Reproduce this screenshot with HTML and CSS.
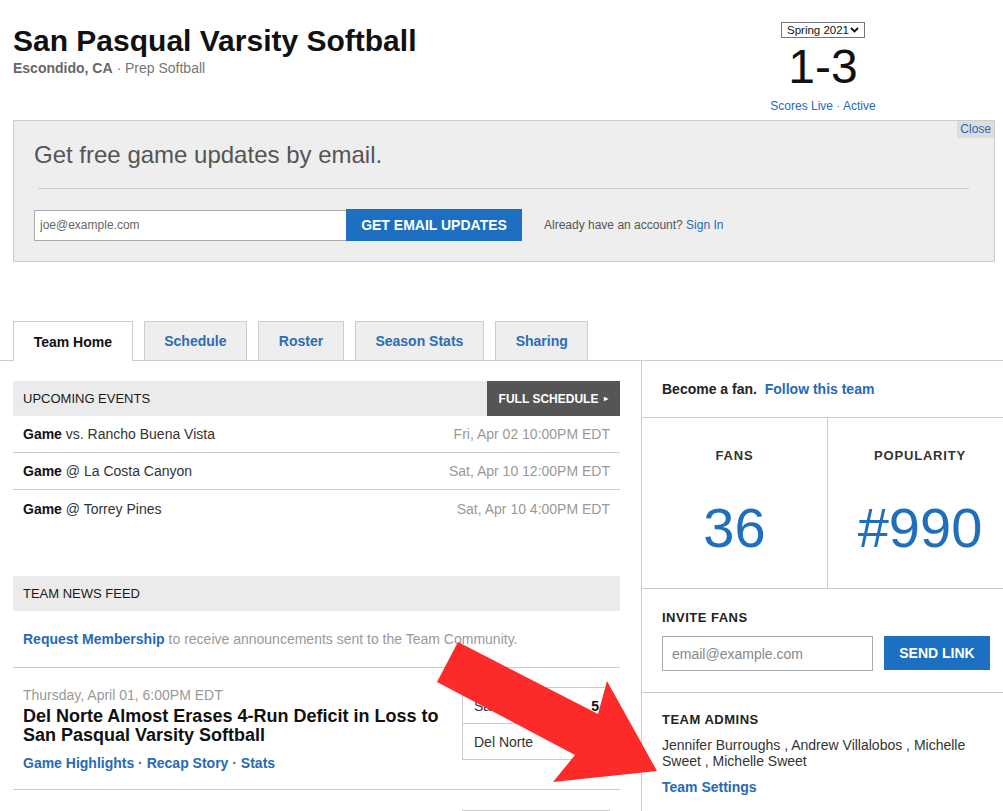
FILE: index.html
```html
<!DOCTYPE html>
<html lang="en">
<head>
<meta charset="utf-8">
<title>San Pasqual Varsity Softball</title>
<link rel="stylesheet" href="styles.css">
</head>
<body>
<div class="page">
  <header class="top">
    <div class="team">
      <h1 class="team-name">San Pasqual Varsity Softball</h1>
      <div class="team-meta"><b>Escondido, CA</b> · Prep Softball</div>
    </div>
    <div class="record">
      <div class="season-select">
        <span>Spring 2021</span>
        <svg class="chev" width="9" height="6" viewBox="0 0 9 6"><polyline points="1,1 4.5,4.5 8,1" fill="none" stroke="#111" stroke-width="1.8"/></svg>
      </div>
      <div class="record-score">1-3</div>
      <div class="record-links"><a>Scores Live</a> · <a>Active</a></div>
    </div>
  </header>

  <section class="email-banner">
    <a class="banner-close">Close</a>
    <h2 class="banner-title">Get free game updates by email.</h2>
    <hr class="banner-rule">
    <div class="banner-form">
      <input class="banner-input" type="text" placeholder="joe@example.com">
      <button class="banner-btn">GET EMAIL UPDATES</button>
      <span class="banner-account">Already have an account? <a>Sign In</a></span>
    </div>
  </section>

  <nav class="tabs">
    <a class="tab tab-active">Team Home</a>
    <a class="tab">Schedule</a>
    <a class="tab">Roster</a>
    <a class="tab">Season Stats</a>
    <a class="tab">Sharing</a>
  </nav>

  <div class="main">
    <div class="left">
      <div class="section-head">
        <span class="section-title">UPCOMING EVENTS</span>
        <a class="full-btn">FULL SCHEDULE <span class="tri">&#9656;</span></a>
      </div>
      <div class="events">
        <div class="event-row"><span><b>Game</b> vs. Rancho Buena Vista</span><span class="event-date">Fri, Apr 02 10:00PM EDT</span></div>
        <div class="event-row"><span><b>Game</b> @ La Costa Canyon</span><span class="event-date">Sat, Apr 10 12:00PM EDT</span></div>
        <div class="event-row"><span><b>Game</b> @ Torrey Pines</span><span class="event-date">Sat, Apr 10 4:00PM EDT</span></div>
      </div>

      <div class="section-head news-head">
        <span class="section-title">TEAM NEWS FEED</span>
      </div>
      <div class="request-row"><a class="link-bold">Request Membership</a> to receive announcements sent to the Team Community.</div>

      <div class="news-item">
        <div class="news-text">
          <div class="news-date">Thursday, April 01, 6:00PM EDT</div>
          <div class="news-headline">Del Norte Almost Erases 4-Run Deficit in Loss to San Pasqual Varsity Softball</div>
          <div class="news-links"><a>Game Highlights</a> · <a>Recap Story</a> · <a>Stats</a></div>
        </div>
        <div class="score-box">
          <div class="score-row"><span>San Pasqual</span><b>5</b></div>
          <div class="score-row"><span>Del Norte</span><span>4</span></div>
        </div>
      </div>
      <div class="news-item news-item-next">
        <div class="news-text"></div>
        <div class="score-box">
          <div class="score-row"><span></span><b></b></div>
          <div class="score-row"><span></span><span></span></div>
        </div>
      </div>
    </div>

    <aside class="right">
      <div class="fan-cta">Become a fan. &nbsp;<a>Follow this team</a></div>
      <div class="stats">
        <div class="stat">
          <div class="stat-label">FANS</div>
          <div class="stat-value">36</div>
        </div>
        <div class="stat stat-second">
          <div class="stat-label">POPULARITY</div>
          <div class="stat-value">#990</div>
        </div>
      </div>
      <div class="invite">
        <div class="side-label">INVITE FANS</div>
        <div class="invite-form">
          <input class="invite-input" type="text" placeholder="email@example.com">
          <button class="invite-btn">SEND LINK</button>
        </div>
      </div>
      <div class="admins">
        <div class="side-label">TEAM ADMINS</div>
        <div class="admin-names">Jennifer Burroughs , Andrew Villalobos , Michelle Sweet , Michelle Sweet</div>
        <a class="settings-link">Team Settings</a>
      </div>
    </aside>
  </div>

  <svg class="arrow" width="240" height="160" viewBox="430 632 240 160">
    <polygon points="458,642 598,714 607,681 657,771 553,782 575,755 437,682" fill="#fd2a2a"/>
  </svg>
</div>
</body>
</html>
```

FILE: styles.css
```css
html, body {
  overflow: hidden;
}
body {
  margin: 0;
  font-family: "Liberation Sans", Arial, sans-serif;
  color: #222;
  background: #fff;
}
a {
  color: #2769b7;
  text-decoration: none;
}
.page {
  position: relative;
  width: 1012px;
}

/* header */
.top {
  display: flex;
  justify-content: space-between;
  align-items: flex-start;
  padding-left: 13px;
}
.team {
  padding-top: 24px;
}
.team-name {
  margin: 0;
  font-size: 30px;
  line-height: 34px;
  font-weight: bold;
  color: #111;
}
.team-meta {
  margin-top: 2px;
  font-size: 14px;
  line-height: 16px;
  color: #777;
}
.team-meta b {
  color: #666;
}
.record {
  width: 120px;
  margin-right: 129px;
  padding-top: 22px;
  display: flex;
  flex-direction: column;
  align-items: center;
}
.season-select {
  width: 84px;
  height: 16px;
  box-sizing: border-box;
  border: 1px solid #767676;
  font-size: 11.5px;
  line-height: 14px;
  white-space: nowrap;
  color: #111;
  display: flex;
  align-items: center;
  justify-content: space-between;
  padding: 0 5px 0 5px;
}
.record-score {
  margin-top: 5px;
  font-size: 48px;
  line-height: 48px;
  color: #111;
}
.record-links {
  margin-top: 8px;
  font-size: 12px;
  line-height: 14px;
  color: #888;
}

/* email banner */
.email-banner {
  position: relative;
  margin: 7px 17px 0 13px;
  background: #eee;
  border: 1px solid #ccc;
  padding: 20px 25px 20px 20px;
}
.banner-close {
  position: absolute;
  top: 0;
  right: 0;
  background: #ddd;
  font-size: 12px;
  line-height: 17px;
  padding: 0 3px;
}
.banner-title {
  margin: 0;
  font-size: 24px;
  line-height: 28px;
  font-weight: normal;
  color: #555;
}
.banner-rule {
  border: 0;
  border-top: 1px solid #ccc;
  height: 0;
  margin: 19px 0 20px 4px;
}
.banner-form {
  display: flex;
  align-items: center;
}
.banner-input {
  width: 312px;
  height: 31px;
  box-sizing: border-box;
  border: 1px solid #aaa;
  border-right: 0;
  padding: 0 5px;
  margin: 0;
  font-family: "Liberation Sans", Arial, sans-serif;
  font-size: 12px;
  background: #fff;
  outline: none;
}
.banner-input::placeholder {
  color: #666;
}
.banner-btn {
  width: 176px;
  height: 32px;
  border: 0;
  margin: 0;
  background: #1c6fc1;
  color: #fff;
  font-family: "Liberation Sans", Arial, sans-serif;
  font-weight: bold;
  font-size: 14px;
  padding: 0;
}
.banner-account {
  margin-left: 22px;
  font-size: 12px;
  color: #555;
}

/* tabs */
.tabs {
  display: flex;
  align-items: flex-end;
  gap: 11px;
  margin-top: 59px;
  padding-left: 13px;
  height: 39px;
  border-bottom: 1px solid #ccc;
}
.tab {
  height: 39px;
  box-sizing: border-box;
  padding: 0 19.65px;
  border: 1px solid #ccc;
  border-bottom: 0;
  background: #eee;
  display: flex;
  align-items: center;
  font-size: 14px;
  font-weight: bold;
  color: #2a6db5;
}
.tab-active {
  height: 40px;
  margin-bottom: -1px;
  background: #fff;
  color: #111;
}

/* main columns */
.main {
  display: flex;
  align-items: flex-start;
}
.left {
  width: 607px;
  margin-left: 13px;
  padding-top: 20px;
}
.right {
  width: 370px;
  margin-left: 21px;
  border-left: 1px solid #ccc;
  min-height: 460px;
}

/* left sections */
.section-head {
  display: flex;
  justify-content: space-between;
  align-items: stretch;
  height: 35px;
  background: #ebebeb;
}
.section-title {
  display: flex;
  align-items: center;
  padding-left: 10px;
  font-size: 13px;
  color: #1a1a1a;
}
.full-btn {
  width: 133px;
  display: flex;
  align-items: center;
  justify-content: center;
  gap: 6px;
  background: #555;
  color: #fff;
  font-weight: bold;
  font-size: 12px;
}
.tri {
  font-size: 8px;
}
.event-row {
  display: flex;
  justify-content: space-between;
  align-items: center;
  height: 37px;
  box-sizing: border-box;
  padding: 0 10px;
  border-bottom: 1px solid #ccc;
  font-size: 14px;
  color: #333;
}
.event-row b {
  color: #111;
}
.event-row:last-child {
  border-bottom: 0;
}
.event-date {
  color: #999;
}
.news-head {
  margin-top: 49px;
}
.request-row {
  height: 57px;
  box-sizing: border-box;
  display: flex;
  align-items: center;
  gap: 4px;
  padding: 0 10px;
  border-bottom: 1px solid #ccc;
  font-size: 14px;
  color: #999;
}
.link-bold {
  font-weight: bold;
}
.news-item {
  display: flex;
  justify-content: space-between;
  align-items: flex-start;
  padding: 19px 10px 18px;
  border-bottom: 1px solid #ccc;
}
.news-item-next {
  padding-top: 20px;
}
.news-text {
  width: 430px;
}
.news-date {
  font-size: 14px;
  line-height: 16px;
  color: #999;
}
.news-headline {
  margin-top: 4px;
  font-size: 18px;
  line-height: 19px;
  font-weight: bold;
  color: #111;
}
.news-links {
  margin-top: 10px;
  font-size: 14px;
  line-height: 16px;
  font-weight: bold;
  color: #666;
}
.score-box {
  width: 146px;
  border: 1px solid #ccc;
  border-top: 0;
  font-size: 14px;
  color: #333;
}
.score-row {
  height: 36px;
  box-sizing: border-box;
  border-top: 1px solid #ccc;
  display: flex;
  justify-content: space-between;
  align-items: center;
  padding: 0 10px 0 11px;
}
.score-row b {
  color: #111;
}

/* right column */
.fan-cta {
  padding: 20px 22px 20px 20px;
  font-size: 14px;
  line-height: 16px;
  font-weight: bold;
  color: #222;
  border-bottom: 1px solid #ccc;
}
.stats {
  display: grid;
  grid-template-columns: 185px 1fr;
  border-bottom: 1px solid #ccc;
}
.stat {
  padding: 30px 0 32px;
  text-align: center;
}
.stat-second {
  border-left: 1px solid #ccc;
}
.stat-label {
  font-size: 13px;
  line-height: 16px;
  font-weight: bold;
  letter-spacing: 0.8px;
  color: #333;
}
.stat-value {
  margin-top: 36px;
  font-size: 56px;
  line-height: 56px;
  color: #1f6fbb;
}
.invite {
  padding: 21px 22px 21px 20px;
  border-bottom: 1px solid #ccc;
}
.side-label {
  font-size: 13px;
  line-height: 16px;
  font-weight: bold;
  letter-spacing: 0.5px;
  color: #222;
}
.invite-form {
  margin-top: 10px;
  display: flex;
  align-items: flex-start;
  gap: 11px;
}
.invite-input {
  width: 211px;
  height: 35px;
  box-sizing: border-box;
  margin: 0;
  border: 1px solid #aaa;
  padding: 0 9px;
  font-family: "Liberation Sans", Arial, sans-serif;
  font-size: 14px;
  outline: none;
}
.invite-input::placeholder {
  color: #888;
}
.invite-btn {
  width: 106px;
  height: 34px;
  margin: 0;
  border: 0;
  padding: 0;
  background: #1c6fc1;
  color: #fff;
  font-family: "Liberation Sans", Arial, sans-serif;
  font-weight: bold;
  font-size: 14px;
}
.admins {
  padding: 19px 22px 19px 20px;
}
.admin-names {
  margin-top: 9px;
  font-size: 14px;
  line-height: 16px;
  color: #333;
}
.settings-link {
  display: block;
  margin-top: 10px;
  font-size: 14px;
  line-height: 16px;
  font-weight: bold;
}

/* overlay arrow */
.arrow {
  position: absolute;
  left: 430px;
  top: 632px;
  pointer-events: none;
}
```
